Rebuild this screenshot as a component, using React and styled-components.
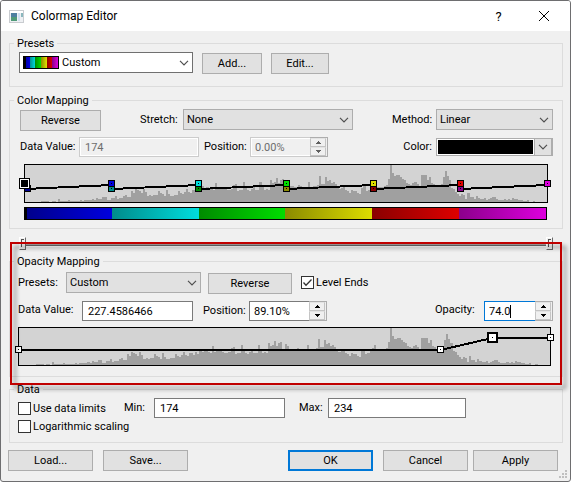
import React, { useState } from "react";
import styled, { createGlobalStyle, css } from "styled-components";

const histogram = [
  0, 0, 0, 0, 0, 0, 0, 0, 1, 1, 1, 1, 0, 1, 1, 0,
  3, 1, 1, 1, 1, 2, 1, 1, 1, 1, 1, 2, 1, 2, 2, 2,
  2, 3, 2, 4, 3, 3, 5, 5, 2, 2, 4, 4, 6, 3, 4, 4,
  6, 7, 5, 5, 11, 9, 13, 12, 11, 9, 13, 10, 6, 7, 6, 7,
  7, 11, 9, 8, 6, 12, 8, 6, 6, 7, 7, 11, 9, 8, 10, 13,
  10, 9, 12, 12, 10, 13, 11, 16, 13, 15, 14, 13, 12, 19, 13, 15,
  14, 14, 13, 12, 12, 13, 17, 18, 11, 12, 12, 20, 15, 12, 11, 13,
  15, 12, 12, 20, 16, 12, 13, 12, 22, 19, 20, 24, 19, 22, 23, 14,
  21, 19, 16, 16, 15, 15, 17, 16, 14, 14, 15, 20, 14, 16, 16, 17,
  26, 18, 18, 25, 21, 22, 19, 20, 18, 16, 13, 14, 16, 12, 11, 9,
  12, 11, 11, 9, 8, 14, 16, 11, 12, 15, 17, 20, 15, 15, 15, 15,
  16, 17, 23, 38, 29, 26, 27, 27, 25, 23, 22, 19, 18, 17, 19, 20,
  18, 16, 27, 27, 27, 22, 25, 19, 18, 16, 15, 15, 18, 25, 31, 26,
  22, 14, 13, 10, 8, 6, 8, 7, 3, 9, 5, 5, 3, 6, 4, 3,
  3, 4, 2, 3, 4, 5, 5, 3, 2, 2, 2, 3, 2, 3, 2, 4,
  3, 3, 2, 2, 1, 1, 2, 0, 0, 1, 0, 0, 0, 0, 0, 0,
];

const bands = [
  { from: "#00008b", to: "#0000dd" },
  { from: "#008b8b", to: "#00dddd" },
  { from: "#008b00", to: "#00dd00" },
  { from: "#8b8b00", to: "#dddd00" },
  { from: "#8b0000", to: "#dd0000" },
  { from: "#8b008b", to: "#dd00dd" },
];

const bandStops = bands
  .map(({ from, to }, i) => `${from} ${(i * 100) / 6}% , ${to} ${((i + 1) * 100) / 6}%`)
  .join(", ");

const colorCurves = bands.map((_, i) => [
  [(i * 100) / 6, 24],
  [((i + 1) * 100) / 6, 20],
]);

const colorPoints = [
  { x: 0.5, y: 24, fill: "#00008b" },
  { x: 0, y: 19, fill: "#000", active: true },
  ...bands.slice(1).flatMap((band, i) => [
    { x: ((i + 1) * 100) / 6, y: 24, fill: band.from },
    { x: ((i + 1) * 100) / 6, y: 19, fill: bands[i].to },
  ]),
  { x: 100, y: 19, fill: "#dd00dd" },
];

const opacityCurves = [[[0, 22], [79.4, 22], [89.1, 10], [100, 10]]];

const opacityPoints = [
  { x: 0, y: 22, fill: "#fff" },
  { x: 79.4, y: 22, fill: "#fff" },
  { x: 89.1, y: 10, fill: "#fff", active: true, dark: true },
  { x: 100, y: 10, fill: "#fff" },
];

const Chevron = () => (
  <ChevronIcon viewBox="0 0 10 6" aria-hidden="true">
    <path d="M1 0.8 L5 4.8 L9 0.8" />
  </ChevronIcon>
);

const Dropdown = ({ id, width, options, light, swatch }) => (
  <SelectBox $width={width} $light={light}>
    {swatch && <Swatch />}
    <SelectArea>
      <Select id={id} aria-label={swatch ? "Presets" : undefined}>
        {options.map((o) => (
          <option key={o}>{o}</option>
        ))}
      </Select>
      <Chevron />
    </SelectArea>
  </SelectBox>
);

const Spinner = ({ id, width, initial, disabled, active }) => {
  const [value, setValue] = useState(initial);
  return (
    <SpinBox $width={width}>
      <SpinText $disabled={disabled} $active={active}>
        <SpinInput
          id={id}
          value={value}
          disabled={disabled}
          $hug={active}
          onChange={(e) => setValue(e.target.value)}
        />
        {active && <Caret />}
      </SpinText>
      <SpinButtons $disabled={disabled}>
        <button type="button" aria-label="Increase" disabled={disabled}>
          <svg viewBox="0 0 5 3"><path d="M2 0h1v1h1v1h1v1H0V2h1V1h1z" /></svg>
        </button>
        <button type="button" aria-label="Decrease" disabled={disabled}>
          <svg viewBox="0 0 5 3"><path d="M0 0h5v1H4v1H3v1H2V2H1V1H0z" /></svg>
        </button>
      </SpinButtons>
    </SpinBox>
  );
};

const Plot = ({ curves, points, inset }) => (
  <PlotBox $inset={inset}>
    <svg viewBox="0 0 256 37" preserveAspectRatio="none" aria-hidden="true">
      <path
        fill="#a0a0a0"
        shapeRendering="crispEdges"
        d={histogram.map((h, i) => `M${i} 37v${-h}h1v${h}z`).join("")}
      />
      {curves.map((curve, i) => (
        <polyline key={i} points={curve.map(([x, y]) => `${x * 2.56},${y}`).join(" ")} />
      ))}
    </svg>
    <PointLayer>
      {points.map((p, i) => (
        <Point key={i} $fill={p.fill} $active={p.active} $dark={p.dark} style={{ left: `${p.x}%`, top: p.y }} />
      ))}
    </PointLayer>
  </PlotBox>
);

const ColormapEditor = () => {
  const [levelEnds, setLevelEnds] = useState(true);

  return (
    <>
      <GlobalStyle />
      <Dialog>
        <TitleBar>
          <svg className="app-icon" viewBox="0 0 15 13" aria-hidden="true">
            <path fill="#c9ccd0" d="M0 0h15v13H0z" />
            <path fill="#eef0f3" d="M1 1h13v11H1z" />
            <path fill="#fff" d="M1 1h13v2H1z" />
            <path fill="#4d7fa0" d="M2 3h6v4H2z" />
            <path fill="#4f9a78" d="M2 7h6v4H2z" />
            <path fill="#cfe0f2" d="M9 3h2v8H9z" />
            <path fill="#8ab7bd" d="M12 3h2v4h-2z" />
          </svg>
          <h1>Colormap Editor</h1>
          <TitleButton type="button" aria-label="Help">?</TitleButton>
          <TitleButton type="button" aria-label="Close">
            <svg viewBox="0 0 10 10"><path d="M0 0L10 10M10 0L0 10" /></svg>
          </TitleButton>
        </TitleBar>

        <Content>
          <Group $pad={9}>
            <legend>Presets</legend>
            <Row $gap={9}>
              <Dropdown width={174} options={["Custom"]} light swatch />
              <Button $width={60}>Add...</Button>
              <Button $width={58}>Edit...</Button>
            </Row>
          </Group>

          <Group $pad={10}>
            <legend>Color Mapping</legend>
            <Row $spread>
              <Button $width={81}>Reverse</Button>
              <Field $label={39}>
                <label htmlFor="stretch">Stretch:</label>
                <Dropdown id="stretch" width={170} options={["None"]} />
              </Field>
              <Field $label={40}>
                <label htmlFor="method">Method:</label>
                <Dropdown id="method" width={117} options={["Linear"]} />
              </Field>
            </Row>
            <Row $gap={5} $top={6}>
              <Field $label={55}>
                <label htmlFor="color-value">Data Value:</label>
                <TextInput id="color-value" $width={120} defaultValue="174" disabled />
              </Field>
              <Field $label={42}>
                <label htmlFor="color-position">Position:</label>
                <Spinner id="color-position" width={78} initial="0.00%" disabled />
              </Field>
              <Field $end>
                <label htmlFor="color">Color:</label>
                <ColorButton id="color" type="button">
                  <span />
                  <Chevron />
                </ColorButton>
              </Field>
            </Row>
            <Plot curves={colorCurves} points={colorPoints} inset />
            <ColorBar />
          </Group>

          <RangeSlider>
            <input type="range" aria-label="Range start" defaultValue="0" />
            <input type="range" aria-label="Range end" defaultValue="100" />
          </RangeSlider>

          <Highlighted>
            <Group $pad={8} $flush>
              <legend>Opacity Mapping</legend>
              <Row $gap={7} $top={2}>
                <Field $label={44}>
                  <label htmlFor="opacity-preset">Presets:</label>
                  <Dropdown id="opacity-preset" width={135} options={["Custom"]} />
                </Field>
                <Button $width={84}>Reverse</Button>
                <Check $left={2}>
                  <input
                    type="checkbox"
                    checked={levelEnds}
                    onChange={(e) => setLevelEnds(e.target.checked)}
                  />
                  Level Ends
                </Check>
              </Row>
              <Row $gap={10} $top={7}>
                <Field $label={60} $raised>
                  <label htmlFor="opacity-value">Data Value:</label>
                  <TextInput id="opacity-value" $width={111} defaultValue="227.4586466" />
                </Field>
                <Field $label={42}>
                  <label htmlFor="opacity-position">Position:</label>
                  <Spinner id="opacity-position" width={78} initial="89.10%" />
                </Field>
                <Field $label={45} $end $raised>
                  <label htmlFor="opacity">Opacity:</label>
                  <Spinner id="opacity" width={69} initial="74.0" active />
                </Field>
              </Row>
              <Plot curves={opacityCurves} points={opacityPoints} />
            </Group>
          </Highlighted>

          <DataGroup $pad={8} $flush>
            <legend>Data</legend>
            <DataGrid>
              <Check>
                <input type="checkbox" />
                Use data limits
              </Check>
              <Field $label={26}>
                <label htmlFor="min">Min:</label>
                <TextInput id="min" $width={131} defaultValue="174" />
              </Field>
              <Field $label={25}>
                <label htmlFor="max">Max:</label>
                <TextInput id="max" $width={138} defaultValue="234" />
              </Field>
              <Check $full>
                <input type="checkbox" />
                Logarithmic scaling
              </Check>
            </DataGrid>
          </DataGroup>
        </Content>

        <Footer>
          <Button $width={85}>Load...</Button>
          <Button $width={85}>Save...</Button>
          <div className="actions">
            <Button $width={85} $primary>OK</Button>
            <Button $width={85}>Cancel</Button>
            <Button $width={85}>Apply</Button>
          </div>
          <Grip viewBox="0 0 8 8" aria-hidden="true">
            <path d="M6 0h2v2H6zM3 3h2v2H3zM6 3h2v2H6zM0 6h2v2H0zM3 6h2v2H3zM6 6h2v2H6z" />
          </Grip>
        </Footer>
      </Dialog>
    </>
  );
};

export default ColormapEditor;

const GlobalStyle = createGlobalStyle`
  * {
    box-sizing: border-box;
  }

  body {
    margin: 0;
    background: #fff;
  }

  body, button, input, select {
    font-family: Roboto, "Liberation Sans", sans-serif;
    font-size: 11px;
    color: #000;
  }
`;

const Dialog = styled.div`
  display: flex;
  flex-direction: column;
  min-height: 100vh;
  background: #f0f0f0;
  border: 1px solid #6e6e70;
  border-radius: 3px;
  overflow: hidden;
`;

const TitleBar = styled.header`
  display: flex;
  align-items: center;
  height: 30px;
  padding: 0 4px 0 8px;
  background: #fff;

  .app-icon {
    width: 15px;
    height: 13px;
  }

  h1 {
    flex: 1;
    margin: 0 0 0 7px;
    font-size: 12px;
    font-weight: 400;
  }
`;

const TitleButton = styled.button`
  display: flex;
  align-items: center;
  justify-content: center;
  width: 45px;
  height: 30px;
  padding: 0;
  border: 0;
  background: none;
  font-size: 13px;

  svg {
    width: 10px;
    height: 10px;
    fill: none;
    stroke: #000;
    overflow: visible;
  }
`;

const Content = styled.main`
  padding: 5px 7px 0 8px;
`;

const Group = styled.fieldset`
  min-width: 0;
  margin: ${({ $flush }) => ($flush ? "0" : "0 0 6px")};
  padding: 2px 9px 12px ${({ $pad }) => $pad}px;
  border: 1px solid #dcdcdc;

  legend {
    margin-left: ${({ $pad }) => 4 - $pad}px;
    padding: 2px 3px 0;
    line-height: 12px;
  }

  &:nth-of-type(2) {
    margin-bottom: 8px;
    padding-bottom: 8px;
  }
`;

const Row = styled.div`
  display: flex;
  gap: ${({ $gap }) => $gap || 0}px;
  margin-top: ${({ $top }) => $top || 0}px;
  justify-content: ${({ $spread }) => ($spread ? "space-between" : "flex-start")};
  align-items: flex-start;
`;

const Field = styled.div`
  display: flex;
  align-items: center;
  gap: 4px;
  margin-left: ${({ $end }) => ($end ? "auto" : 0)};

  label {
    width: ${({ $label }) => ($label ? `${$label}px` : "auto")};
    line-height: 16px;
    padding-bottom: ${({ $raised }) => ($raised ? 2 : 0)}px;
    white-space: nowrap;
  }
`;

const Button = styled.button.attrs({ type: "button" })`
  width: ${({ $width }) => $width}px;
  height: 21px;
  margin-top: 1px;
  padding: 1px 0 0;
  line-height: 16px;
  background: #e1e1e1;
  border: ${({ $primary }) => ($primary ? "2px solid #0078d7" : "1px solid #adadad")};
`;

const SelectBox = styled.div`
  display: flex;
  align-items: center;
  width: ${({ $width }) => $width}px;
  height: 21px;
  background: ${({ $light }) => ($light ? "#fff" : "#e1e1e1")};
  border: 1px solid ${({ $light }) => ($light ? "#707070" : "#adadad")};
`;

const SelectArea = styled.div`
  display: grid;
  flex: 1;
  align-items: center;

  > * {
    grid-area: 1 / 1;
  }
`;

const Select = styled.select`
  appearance: none;
  width: 100%;
  height: 19px;
  padding: 0 20px 0 3px;
  border: 0;
  background: none;
`;

const ChevronIcon = styled.svg`
  width: 10px;
  height: 6px;
  margin-right: 3px;
  justify-self: end;
  fill: none;
  stroke: #505050;
  stroke-width: 1.2;
  pointer-events: none;
`;

const Swatch = styled.span`
  width: 36px;
  height: 13px;
  margin-left: 3px;
  border: 1px solid #000;
  background: linear-gradient(90deg, #000 0 2px, transparent 2px), linear-gradient(90deg, ${bandStops});
`;

const TextInput = styled.input`
  width: ${({ $width }) => $width}px;
  height: 20px;
  padding: 0 5px;
  background: #fff;
  border: 1px solid #7a7a7a;

  &:disabled {
    background: #f0f0f0;
    border-color: #ccc;
    box-shadow: inset 0 0 0 1px #fff;
    color: #6d6d6d;
  }
`;

const SpinBox = styled.div`
  display: flex;
  width: ${({ $width }) => $width}px;
  height: 20px;
`;

const SpinText = styled.div`
  display: flex;
  flex: 1;
  align-items: center;
  min-width: 0;
  padding-left: 4px;
  background: ${({ $disabled }) => ($disabled ? "#f0f0f0" : "#fff")};
  border: 1px solid ${({ $disabled, $active }) => ($active ? "#0078d7" : $disabled ? "#ccc" : "#7a7a7a")};
  border-right: 0;
  box-shadow: ${({ $disabled }) => ($disabled ? "inset 1px 0 #fff, inset 0 1px #fff, inset 0 -1px #fff" : "none")};
`;

const SpinInput = styled.input`
  min-width: 0;
  width: ${({ $hug }) => ($hug ? "auto" : "100%")};
  height: 16px;
  padding: 0;
  border: 0;
  outline: 0;
  background: none;
  field-sizing: ${({ $hug }) => ($hug ? "content" : "fixed")};

  &:disabled {
    color: #6d6d6d;
  }
`;

const Caret = styled.span`
  width: 1px;
  height: 13px;
  background: #000;
`;

const SpinButtons = styled.div`
  display: flex;
  flex-direction: column;
  width: 18px;
  border: 1px solid #adadad;
  border-left: 0;
  background: #f0f0f0;

  button {
    display: flex;
    flex: 1;
    align-items: center;
    justify-content: center;
    min-height: 0;
    margin-right: 1px;
    padding: 0;
    border: 1px solid #c4c4c4;
    border-top-color: #e3e3e3;
    background: #f0f0f0;
  }

  svg {
    width: 5px;
    height: 3px;
    fill: ${({ $disabled }) => ($disabled ? "#606060" : "#000")};
    shape-rendering: crispEdges;
  }
`;

const ColorButton = styled.button`
  display: flex;
  align-items: stretch;
  width: 117px;
  height: 18px;
  margin-top: 1px;
  padding: 0;
  border: 1px solid #adadad;
  background: #e1e1e1;

  span {
    flex: 1;
    border: 1px solid #fff;
    background: #000;
  }

  svg {
    align-self: center;
    box-sizing: content-box;
    padding: 5px 3px;
    margin: 0;
    border: solid #adadad;
    border-width: 0 1px;
  }
`;

const PlotBox = styled.div`
  position: relative;
  height: 39px;
  margin: ${({ $inset }) => ($inset ? "7px 5px 4px 4px" : "6px 2px -2px 0")};
  border: 1px solid #000;
  background: #d3d3d3;

  > svg {
    display: block;
    width: 100%;
    height: 37px;
  }

  polyline {
    fill: none;
    stroke: #000;
    stroke-width: 2px;
    vector-effect: non-scaling-stroke;
    shape-rendering: crispEdges;
  }
`;

/* control points sit on top of the curve, the last one on the frame itself */
const PointLayer = styled.div`
  position: absolute;
  inset: 0 -1px 0 0;
`;

const Point = styled.span`
  position: absolute;
  width: 7px;
  height: 7px;
  margin: -4px 0 0 -4px;
  border: 1px solid #000;
  background: linear-gradient(#000, #000) center / 1px 1px no-repeat ${({ $fill }) => $fill};

  ${({ $active, $dark }) => $active && css`
    width: 11px;
    height: 11px;
    margin: -6px 0 0 -6px;
    ${$dark ? "border-width: 2px;" : "box-shadow: inset 0 0 0 1px #fff;"}
  `}
`;

const ColorBar = styled.div`
  height: 13px;
  margin: 0 6px 0 4px;
  border: 1px solid #000;
  background: linear-gradient(90deg, #000 0 2px, transparent 2px), linear-gradient(90deg, ${bandStops});
`;

const RangeSlider = styled.div`
  display: grid;
  height: 13px;
  margin: 0 10px 4px;
  background: linear-gradient(#a0a0a0 0 1px, #696969 1px 2px, #fff 2px 3px) 0 7px / 100% 3px no-repeat;

  input {
    appearance: none;
    grid-area: 1 / 1;
    width: 100%;
    height: 13px;
    margin: 0;
    background: none;
    pointer-events: none;
  }

  input::-webkit-slider-thumb {
    appearance: none;
    width: 7px;
    height: 13px;
    border: 1px solid;
    border-color: #fff #696969 #696969 #fff;
    background:
      linear-gradient(#505050, #505050) 1px 1px / 1px 8px no-repeat,
      linear-gradient(#505050, #505050) 1px 1px / 3px 1px no-repeat,
      #f0f0f0;
    pointer-events: auto;
  }
`;

const Highlighted = styled.section`
  position: relative;
  margin-bottom: 5px;

  &::after {
    content: "";
    position: absolute;
    inset: -12px 1px -8px 1px;
    border: 2px solid #c00000;
    filter: drop-shadow(4px 4px 2px rgba(0, 0, 0, 0.45));
    pointer-events: none;
  }
`;

const Check = styled.label`
  display: flex;
  align-items: center;
  gap: 2px;
  height: ${({ $full }) => ($full ? "17px" : "21px")};
  margin-left: ${({ $left }) => $left || 0}px;
  white-space: nowrap;
  ${({ $full }) => $full && "grid-column: 1 / -1;"}

  input {
    appearance: none;
    flex: none;
    width: 13px;
    height: 13px;
    margin: 0;
    border: 1px solid #333;
    background: #fff;
  }

  input:checked {
    background: #fff url("data:image/svg+xml,%3Csvg xmlns='http://www.w3.org/2000/svg' viewBox='0 0 11 11'%3E%3Cpath d='M1.5 5.5L4 8.3L9.5 2.5' fill='none' stroke='%23333' stroke-width='1.3'/%3E%3C/svg%3E");
  }
`;

const DataGroup = styled(Group)`
  padding-bottom: 7px;
`;

const DataGrid = styled.div`
  display: grid;
  grid-template-columns: 92px max-content max-content;
  grid-template-rows: 20px 17px;
  column-gap: 14px;
  align-items: center;
`;

const Footer = styled.footer`
  display: flex;
  gap: 10px;
  position: relative;
  padding: 6px 12px 10px 7px;

  .actions {
    display: flex;
    gap: 5px;
    margin-left: auto;
  }

  .actions ${Button}:first-child {
    margin-right: 5px;
  }
`;

const Grip = styled.svg`
  position: absolute;
  right: 3px;
  bottom: 3px;
  width: 8px;
  height: 8px;
  fill: #bfbfbf;
`;
